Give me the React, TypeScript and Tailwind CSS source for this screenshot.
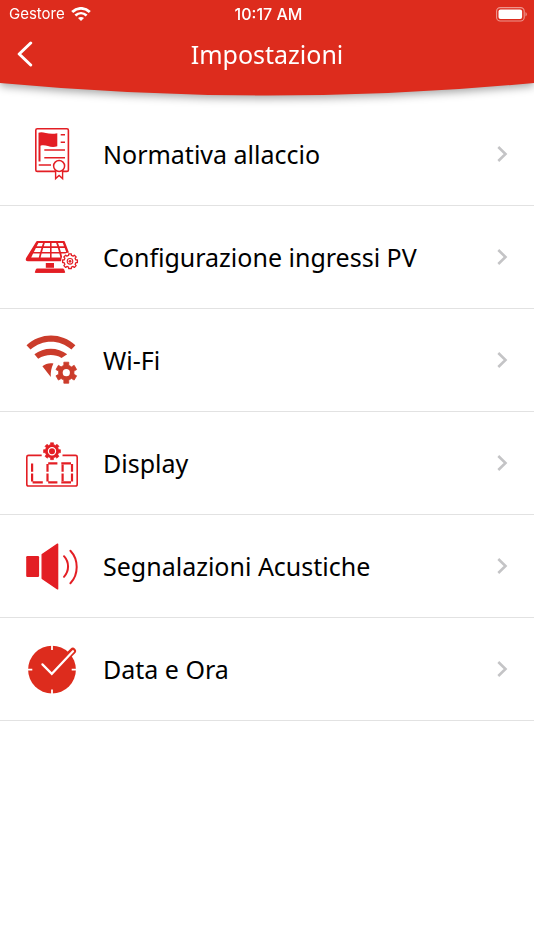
import type { ReactNode } from "react";

const RED = "#e31e24";

function gearPath(cx: number, cy: number, outer: number, inner: number, teeth: number) {
  const step = (Math.PI * 2) / teeth;
  const points: string[] = [];
  for (let i = 0; i < teeth; i++) {
    const a = i * step - Math.PI / 2;
    const corners: [number, number][] = [
      [a - step * 0.3, inner],
      [a - step * 0.22, outer],
      [a + step * 0.22, outer],
      [a + step * 0.3, inner],
    ];
    for (const [angle, r] of corners) {
      points.push(`${(cx + r * Math.cos(angle)).toFixed(2)} ${(cy + r * Math.sin(angle)).toFixed(2)}`);
    }
  }
  return `M${points.join("L")}Z`;
}

function Icon({ children }: { children: ReactNode }) {
  return (
    <svg viewBox="0 0 54 54" className="size-[54px] shrink-0" fill="none" aria-hidden="true">
      {children}
    </svg>
  );
}

const RegulationIcon = () => (
  <Icon>
    <rect x="10.8" y="1.8" width="32.6" height="42.6" rx="1.5" stroke={RED} strokeWidth="1.6" />
    <path d="M13.5 5.8C18 3.6 22 8.2 32.3 6.2V19.3C25 21.8 21 16.8 15.5 18.8V34.5H13.5Z" fill={RED} />
    <path d="M35.7 7.7H40M35.7 15.3H40M19.3 23H40M19.3 30.7H40M13.7 38H26" stroke={RED} strokeWidth="1.4" />
    <path d="M30.6 42V51.6L34.1 48.5L37.6 51.6V42" fill="#fff" stroke={RED} strokeWidth="1.4" />
    <circle cx="34.1" cy="39" r="5.5" fill="#fff" stroke={RED} strokeWidth="1.5" />
  </Icon>
);

const SolarIcon = () => (
  <Icon>
    <path
      d="M12 11.8H39L45 27.5V30.5H3C1.3 30.5 1.4 29.5 1.8 28.5Z"
      fill={RED}
      stroke={RED}
      strokeWidth="1.6"
      strokeLinejoin="round"
    />
    <path
      d="M13.4 12.9H18L16.9 16.2H11.7ZM19.8 12.9H25V16.2H18.8ZM26.6 12.9H31.1L32.3 16.2H26.6ZM33 12.9H37.8L39 16.2H34.2ZM10.9 17.9H16.4L15.2 22H8.9ZM18.2 17.9H25V22H17.1ZM26.6 17.9H32.8L34 22H26.6ZM34.7 17.9H39.7L41.2 22H35.9ZM8.1 23.6H14.8L13.8 27.4H6.2ZM16.6 23.6H25V27.4H15.6ZM26.6 23.6H34.4L35.4 27.4H26.6ZM36.3 23.6H41.8L43.2 27.4H37.3Z"
      fill="#fff"
    />
    <path d="M20.8 33H29V37.8H20.8Z" fill={RED} />
    <path d="M11.5 39H38.5L39.7 42.4H10.3Z" fill={RED} stroke={RED} strokeWidth="1" strokeLinejoin="round" />
    <circle cx="45" cy="31.3" r="9" fill="#fff" />
    <path d={gearPath(45, 31.3, 7.5, 6, 8)} fill="#fff" stroke={RED} strokeWidth="1.3" strokeLinejoin="round" />
    <circle cx="45" cy="31.3" r="2.8" stroke={RED} strokeWidth="1.1" />
    <circle cx="45" cy="31.3" r="1.4" fill={RED} />
  </Icon>
);

const WifiSettingsIcon = () => (
  <Icon>
    <path
      d="M1.5 12.3C15.5 -0.8 36.5 -0.8 50.4 12.3L46.4 16.6C34.5 6 17.5 6 5.5 16.6Z"
      fill="#cb3c2b"
    />
    <path d="M9.4 21.3C18.5 13.8 33 13.8 42.2 21.3L36.5 24.9C29.5 20.8 20.5 21.2 13.2 25.8Z" fill="#cb3c2b" />
    <path d="M17.4 33.3C20.5 30.6 24.5 29.8 28.4 30.5C26.3 35 25.5 39 25.8 44Z" fill="#cb3c2b" />
    <circle cx="41.3" cy="39.7" r="12.6" fill="#fff" />
    <path
      d={gearPath(41.3, 39.7, 10.8, 7.8, 6)}
      fill="#cb3c2b"
      stroke="#cb3c2b"
      strokeWidth="0.8"
      strokeLinejoin="round"
    />
    <circle cx="41.3" cy="39.7" r="3.6" fill="#fff" />
  </Icon>
);

const DisplayIcon = () => (
  <Icon>
    <path
      d="M16.7 19.4H3.5Q1.8 19.4 1.8 21V48.2Q1.8 50 3.5 50H50.5Q52.2 50 52.2 48.2V21Q52.2 19.4 50.5 19.4H37.5"
      stroke={RED}
      strokeWidth="1.6"
    />
    <path d={gearPath(27, 15.2, 8.6, 6.8, 8)} fill={RED} stroke={RED} strokeWidth="0.6" strokeLinejoin="round" />
    <circle cx="27" cy="15.2" r="3.6" stroke="#fff" strokeWidth="1.2" />
    <path
      d="M7.1 27.4V35.8M7.1 37.6V45.4M7.6 46.4H17.8M23.2 27.4H32.4M22.5 28V35.8M22.5 37.6V45.4M23.2 46.4H32.4M36.3 27.4H46M37.6 28.8V35.8M37.6 37.6V45M36.3 46.4H46M47 28V35.8M47 37.6V45.4"
      stroke={RED}
      strokeWidth="2.2"
    />
  </Icon>
);

const SpeakerIcon = () => (
  <Icon>
    <rect x="1.2" y="17" width="12.9" height="21" rx="1.2" fill={RED} />
    <path d="M17.2 15.7L32.6 5.2V49.9L17.2 39.3Z" fill={RED} stroke={RED} strokeWidth="1.4" strokeLinejoin="round" />
    <path
      d="M39 17.2C44.4 23.2 44.4 31.8 39 37.8M45.4 11.7C53.8 20.5 53.8 35.5 45.4 44.3"
      stroke={RED}
      strokeWidth="2"
      strokeLinecap="round"
    />
  </Icon>
);

const ClockIcon = () => (
  <Icon>
    <circle cx="27" cy="27.7" r="23.9" fill="#dd2c1d" />
    <path d="M27 3V8M27 47.4V52.5M2.5 27.7H7.3M46.7 27.7H51.5" stroke="#fff" strokeWidth="1.8" />
    <path d="M42 14.7L47.8 8.9" stroke="#dd2c1d" strokeWidth="6.4" strokeLinecap="round" />
    <path d="M17.4 22.4L26.8 31.8L48 9.2" stroke="#fff" strokeWidth="2.2" strokeLinecap="round" />
  </Icon>
);

const items = [
  { label: "Normativa allaccio", icon: <RegulationIcon /> },
  { label: "Configurazione ingressi PV", icon: <SolarIcon /> },
  { label: "Wi-Fi", icon: <WifiSettingsIcon /> },
  { label: "Display", icon: <DisplayIcon /> },
  { label: "Segnalazioni Acustiche", icon: <SpeakerIcon /> },
  { label: "Data e Ora", icon: <ClockIcon /> },
];

function StatusBar() {
  return (
    <div className="grid h-7 grid-cols-3 items-center pr-1.5 pl-[9px] font-['Inter',sans-serif] leading-5">
      <div className="flex items-center gap-1.5 text-[15px]">
        <span>Gestore</span>
        <svg viewBox="0 0 20 14" className="h-3.5 w-5" fill="none" stroke="#fff" aria-hidden="true">
          <path d="M1.2 5C6.3 0.2 13.7 0.2 18.8 5" strokeWidth="2.9" />
          <path d="M4.4 8.5C7.7 5.4 12.3 5.4 15.6 8.5" strokeWidth="2.6" />
          <path d="M7 11C8.7 9.5 11.3 9.5 13 11L10 14Z" fill="#fff" stroke="none" />
        </svg>
      </div>
      <time className="text-center text-base leading-5 font-medium">10:17 AM</time>
      <svg viewBox="0 0 32 15" className="h-[15px] w-8 justify-self-end" fill="none" aria-hidden="true">
        <rect x="0.6" y="0.6" width="27.6" height="13.4" rx="3.6" stroke="#fff" strokeOpacity="0.5" strokeWidth="1.1" />
        <rect x="2.5" y="2.5" width="23.6" height="9.6" rx="2" fill="#fff" />
        <path d="M29.5 5C31.3 5.7 31.3 8.7 29.5 9.5Z" fill="#fff" fillOpacity="0.5" />
      </svg>
    </div>
  );
}

export default function App() {
  return (
    <div className="min-h-screen bg-white font-['Noto_Sans',sans-serif] text-black">
      <header className="text-white drop-shadow-[0_3px_4px_rgba(0,0,0,0.35)]">
        <div className="bg-[#dd2c1d]">
          <StatusBar />
          <div className="grid h-[52px] grid-cols-[50px_1fr_50px] items-center">
            <button type="button" aria-label="Indietro" className="flex h-full items-center pl-4">
              <svg viewBox="0 0 18 26" className="h-[26px] w-[18px]" fill="none" aria-hidden="true">
                <path
                  d="M14.7 2L3.2 13L14.7 24"
                  stroke="#fff"
                  strokeWidth="3"
                  strokeLinecap="round"
                  strokeLinejoin="round"
                />
              </svg>
            </button>
            <h1 className="text-center text-[25px] leading-[52px]">Impostazioni</h1>
          </div>
        </div>
        <svg
          viewBox="0 0 534 17"
          preserveAspectRatio="none"
          className="-mt-px block h-[17px] w-full"
          aria-hidden="true"
        >
          <path d="M0 0H534V4Q267 29 0 4Z" fill="#dd2c1d" />
        </svg>
      </header>
      <main className="pt-[7px]">
        <ul>
          {items.map(({ label, icon }) => (
            <li key={label} className="border-b border-[#e2e2e2]">
              <button type="button" className="flex h-[102px] w-full items-center pr-[26px] pl-[25px] text-left">
                {icon}
                <span className="ml-6 flex-1 text-[25px] leading-8">{label}</span>
                <svg viewBox="0 0 12 18" className="h-[18px] w-3" fill="none" aria-hidden="true">
                  <path d="M2.3 2L9.5 9L2.3 16" stroke="#c4c4c6" strokeWidth="2.6" />
                </svg>
              </button>
            </li>
          ))}
        </ul>
      </main>
    </div>
  );
}
